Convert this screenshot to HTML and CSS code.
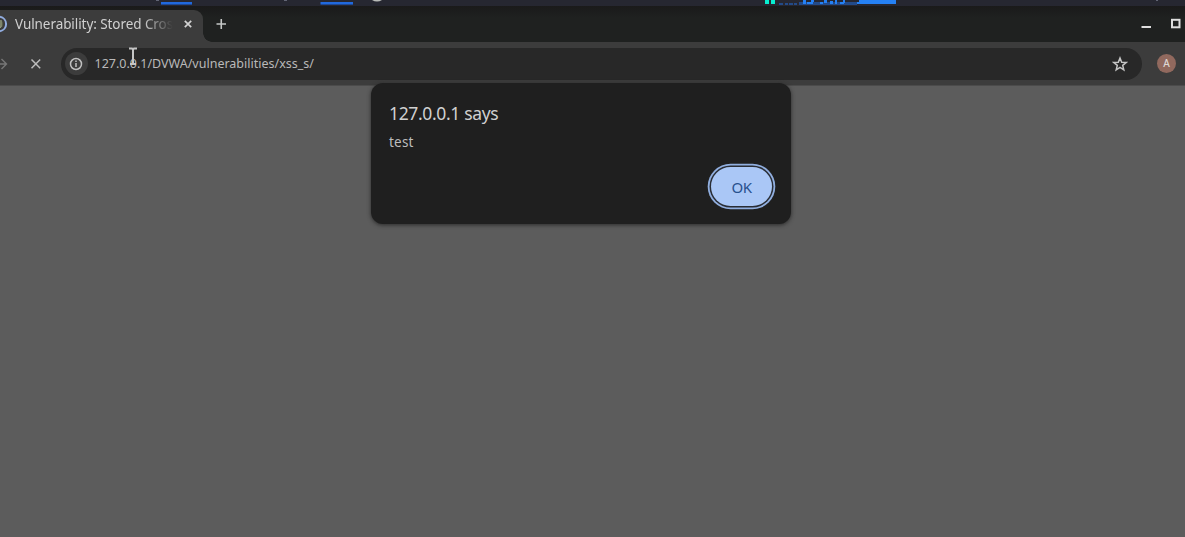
FILE: index.html
```html
<!DOCTYPE html>
<html lang="en">
<head>
<meta charset="utf-8">
<title>Vulnerability: Stored Cross Site Scripting</title>
<link rel="stylesheet" href="styles.css">
</head>
<body>
<svg class="panel" width="1185" height="6" viewBox="0 0 1185 6">
  <path fill="#626575" d="M156 0h3v1h-3zM284 0h3v1h-3zM1156 0h2v1h-2z"/>
  <path fill="#2169dd" d="M161 2h31v2h-31zM320.500 2h32.500v2h-32.500z"/>
  <path fill="#1d4995" d="M161 4h31v1h-31zM320.500 4h32.500v1h-32.500z"/>
  <path fill="#b8bbb8" d="M372 0h10q-5 3-10 0z"/>
  <path fill="#08eed0" d="M765 0h4v4h-4zM771 0h4v4h-4z"/>
  <path fill="#234a88" d="M779 3h4v2h-4zM785 3h3v2h-3zM789 3h4v2h-4zM794 3h3v2h-3zM799 2h58v3h-58z"/>
  <path fill="#2581f5" d="M803 0h3v4h-3zM807 2h6v2h-6zM811 0h3v2h-3zM820 2h3v2h-3zM824 0h3v3h-3zM830 1h3v3h-3zM835 0h2v4h-2zM840 2h4v2h-4zM843 0h2v3h-2zM859 0h37v4h-39v-2h2z"/>
</svg>
<header class="tabstrip">
  <div class="tab">
    <svg class="favicon" width="8" height="18" viewBox="0 0 8 18"><circle cx="-1" cy="9" r="4" fill="#596047"/><path d="M1 5v7q-1 1-2 0" fill="none" stroke="#a3aa91"/><path d="M0 1.800A7.300 7.300 0 0 1 0 16.200" fill="none" stroke="#92ade0" stroke-width="2"/></svg>
    <span class="tab-title">Vulnerability: Stored Cros</span>
    <svg class="tab-close" width="10" height="10" viewBox="0 0 10 10"><path d="M1.800 1.800l6.400 6.400m0-6.400l-6.400 6.400" stroke="#d2d2d2" stroke-width="1.700"/></svg>
  </div>
  <svg class="new-tab" width="12" height="12" viewBox="0 0 12 12"><path d="M1.500 6h9.500M6.250 1v10" stroke="#c5c7c6" stroke-width="1.600"/></svg>
  <svg class="window-controls" width="46" height="14" viewBox="0 0 46 14"><path d="M2.500 9h9.500" stroke="#dedede" stroke-width="2"/><rect x="33" y="1.800" width="7.500" height="7.500" fill="none" stroke="#dedede" stroke-width="2"/></svg>
</header>
<nav class="toolbar">
  <svg class="forward" width="8" height="14" viewBox="0 0 8 14"><path d="M0 7h6.500M1.500 2l5 5-5 5" fill="none" stroke="#777" stroke-width="1.400"/></svg>
  <svg class="stop" width="12" height="12" viewBox="0 0 12 12"><path d="M1.500 1.500l8.700 8.700m0-8.700l-8.700 8.700" stroke="#bcbcbc" stroke-width="1.500"/></svg>
  <div class="address">
    <span class="site-info"><svg width="14" height="14" viewBox="0 0 14 14"><circle cx="7" cy="7" r="5.500" fill="none" stroke="#c0c0c0" stroke-width="1.500"/><path d="M7 6v4M7 3.500v1.500" stroke="#c0c0c0" stroke-width="1.500"/></svg></span>
    <span class="url">127.0.0.1/DVWA/vulnerabilities/xss_s/</span>
    <svg class="star" width="16" height="16" viewBox="0 0 16 16"><path d="M8 2l1.700 4.200 4.500.3-3.500 2.900 1.100 4.400L8 11.400l-3.800 2.400 1.100-4.400-3.500-2.900 4.500-.3z" fill="none" stroke="#c5c5c5" stroke-width="1.500"/></svg>
  </div>
  <span class="avatar">A</span>
</nav>
<main class="page"></main>
<section class="dialog">
  <h1>127.0.0.1 says</h1>
  <p>test</p>
  <button class="ok">OK</button>
</section>
<svg class="cursor" width="10" height="20" viewBox="0 0 10 20"><path d="M1 2.500h3l1 1 1-1h3M5 2v17M2 18h6" fill="none" stroke="#c5c5c5" stroke-width="2"/></svg>
</body>
</html>
```
FILE: styles.css
```css
* { box-sizing: border-box; }
body {
  margin: 0;
  width: 1185px;
  height: 537px;
  display: flex;
  flex-direction: column;
  overflow: hidden;
  background: #5c5c5c;
  font-family: "Noto Sans", sans-serif;
}
svg { display: block; flex: none; }
.panel { background: #262731; }
.tabstrip {
  height: 36px;
  display: flex;
  background: linear-gradient(#1a1a1a, #1f2120 12px);
}
.tab {
  position: relative;
  width: 203px;
  height: 32px;
  margin-top: 4px;
  padding-bottom: 5px;
  display: flex;
  align-items: center;
  border-radius: 0 9px 0 0;
  background: #3c3c3c;
}
.tab::after {
  content: "";
  position: absolute;
  left: 203px;
  bottom: 0;
  width: 9px;
  height: 9px;
  background: radial-gradient(circle at 9px 0, transparent 8.500px, #3c3c3c 9px);
}
.tab-title {
  width: 164px;
  margin-left: 7px;
  white-space: nowrap;
  color: #d0d0d0;
  font-size: 13.500px;
  letter-spacing: -0.070px;
  line-height: 20px;
  -webkit-mask-image: linear-gradient(90deg, #000 128px, transparent 158px);
  mask-image: linear-gradient(90deg, #000 128px, transparent 158px);
}
.tab-close { margin-left: 3.500px; }
.new-tab { margin: 12px 0 0 12px; }
.window-controls { margin: 12px 0 0 auto; }
.toolbar {
  height: 44px;
  display: flex;
  align-items: center;
  background: #3c3c3c;
  border-bottom: 1px solid #4b4b4b;
}
.stop { margin-left: 22px; }
.address {
  width: 1081px;
  height: 32px;
  margin-left: 19px;
  padding: 0 14.500px 0 3.500px;
  display: flex;
  align-items: center;
  border-radius: 16px;
  background: #282828;
}
.site-info {
  width: 23px;
  height: 23px;
  display: grid;
  place-items: center;
  border-radius: 50%;
  background: #3c3c3c;
}
.url {
  margin-left: 7px;
  color: #b9b9b9;
  font-size: 12.500px;
  line-height: 18px;
}
.star { margin-left: auto; }
.avatar {
  width: 19px;
  height: 19px;
  margin-left: 15px;
  border-radius: 50%;
  background: #91695e;
  color: #ddd5d2;
  font-size: 10px;
  font-weight: 500;
  line-height: 19px;
  text-align: center;
}
.page { flex: 1; }
.dialog {
  position: absolute;
  left: 370.500px;
  top: 83px;
  width: 420px;
  height: 141px;
  padding: 18px 18.500px 0 18.500px;
  display: flex;
  flex-direction: column;
  border-radius: 12px;
  background: #1f1f1f;
  box-shadow: 0 1px 4px #292929;
}
.dialog h1 {
  margin: 0;
  color: #d0d0d0;
  font-size: 17.500px;
  font-weight: 400;
  letter-spacing: -0.350px;
  line-height: 24px;
}
.dialog p {
  margin: 7px 0 0;
  color: #bdbdbd;
  font-size: 13.500px;
  letter-spacing: 0.200px;
  line-height: 20px;
}
.ok {
  align-self: flex-end;
  width: 61px;
  height: 39px;
  margin: 15px 0 0;
  padding: 0;
  border: 0;
  border-radius: 20px;
  background: #aac7f6;
  color: #28518e;
  font: 15px "Noto Sans", sans-serif;
  letter-spacing: -0.400px;
  box-shadow: 0 0 0 1.500px #292d35, 0 0 0 3.300px #91afe0;
}
.cursor { position: absolute; left: 128px; top: 46px; }
```
